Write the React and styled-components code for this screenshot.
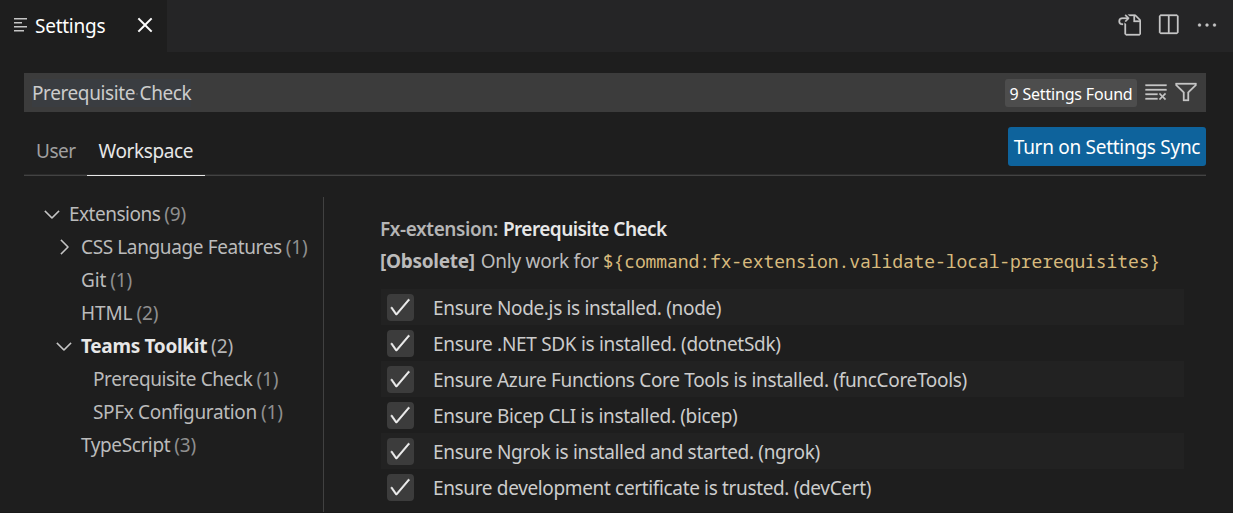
import React from "react";
import styled, { createGlobalStyle, css } from "styled-components";
import {
  VscGoToFile,
  VscSplitHorizontal,
  VscEllipsis,
  VscClearAll,
  VscFilter,
  VscChevronDown,
  VscChevronRight,
  VscCheck,
  VscClose,
} from "react-icons/vsc";

const GlobalStyle = createGlobalStyle`
  * { box-sizing: border-box; }
  body {
    margin: 0;
    background: #1e1e1e;
    color: #cccccc;
    font-family: "Noto Sans", "Open Sans", sans-serif;
    font-size: 19px;
    overflow: hidden;
  }
  svg { display: block; flex: none; }
`;

const Window = styled.div`
  display: flex;
  flex-direction: column;
  height: 513px;
  overflow: hidden;
  border-bottom: 1px solid #191919;
`;

const Label = styled.span`
  white-space: pre;
  letter-spacing: ${(p) => p.$track ?? -0.29}px;
`;

const TitleBar = styled.header`
  display: flex;
  justify-content: space-between;
  height: 52px;
  flex: none;
  background: #252526;
`;

const EditorTab = styled.div`
  display: flex;
  align-items: center;
  width: 167px;
  height: 52px;
  padding: 0 9px 1px 14px;
  background: #1e1e1e;
  color: #ffffff;
`;

const TabIcon = styled.svg`
  margin: 0 8px 2px 0;
`;

const CloseButton = styled.div`
  margin: 0 0 1px auto;
  font-size: 26px;
  svg {
    stroke-width: 0.35px;
  }
`;

const EditorActions = styled.div`
  display: flex;
  align-items: center;
  gap: 15px;
  padding: 0 14px 2px 0;
  font-size: 24px;
  color: #c5c5c5;
  svg {
    stroke-width: 0.2px;
  }
`;

const Header = styled.div`
  display: flex;
  flex-direction: column;
  padding: 21px 27px 0 24px;
`;

const SearchBox = styled.div`
  display: flex;
  align-items: center;
  height: 39px;
  padding: 0 8px;
  background: #3c3c3c;
`;

const Query = styled.div`
  display: flex;
  height: 28px;
  line-height: 29px;
  background: #3a3d41;
`;

const WhitespaceMark = styled.span`
  position: relative;
  white-space: pre;
  letter-spacing: -0.36px;
  &::after {
    content: "";
    position: absolute;
    left: 1px;
    top: 14px;
    width: 2px;
    height: 2px;
    background: #56595d;
  }
`;

const ResultCount = styled.div`
  display: flex;
  align-items: center;
  justify-content: center;
  width: 132px;
  height: 28px;
  margin-left: auto;
  padding-top: 2px;
  border-radius: 3px;
  background: #4d4d4d;
  color: #ffffff;
  font-size: 16px;
`;

const SearchActions = styled.div`
  display: flex;
  gap: 6px;
  margin: 0 0 1px 7px;
  font-size: 24px;
  color: #c5c5c5;
  svg {
    stroke-width: 0.2px;
  }
`;

const ScopeBar = styled.div`
  display: flex;
  align-items: flex-end;
  justify-content: space-between;
  height: 64px;
  background: linear-gradient(#2b2b2b, #2b2b2b) 0 62px / 100% 1px no-repeat,
    linear-gradient(#434343, #434343) 0 63px / 100% 1px no-repeat;
`;

const Scopes = styled.nav`
  display: flex;
`;

const Scope = styled.div`
  width: 63px;
  height: 49px;
  line-height: 48px;
  padding-left: 12px;
  color: #a0a0a0;
  border-bottom: 1px solid transparent;
  ${(p) =>
    p.$active &&
    css`
      width: 118px;
      padding-left: 11.5px;
      color: #e7e7e7;
      border-bottom-color: #e7e7e7;
    `}
`;

const SyncButton = styled.div`
  display: flex;
  align-items: center;
  justify-content: center;
  width: 198px;
  height: 39px;
  margin-bottom: 10px;
  border-radius: 3px;
  background: #0e639c;
  color: #ffffff;
`;

const Body = styled.div`
  display: flex;
  flex: 1;
  min-height: 0;
`;

const Tree = styled.aside`
  width: 324px;
  margin-top: 21px;
  border-right: 1px solid #414141;
`;

const TreeRow = styled.div`
  display: flex;
  align-items: center;
  height: 33px;
  padding-left: ${(p) => 40 + p.$level * 12}px;
  color: ${(p) => (p.$selected ? "#e7e7e7" : "#bbbbbb")};
  font-weight: ${(p) => (p.$selected ? 700 : 400)};
`;

const Twistie = styled.span`
  width: 29px;
  flex: none;
  font-size: 24px;
  color: #c5c5c5;
  svg {
    stroke-width: 0.2px;
  }
`;

const Count = styled.span`
  margin-left: 4px;
  letter-spacing: -0.15px;
  font-weight: 400;
  color: ${(p) => (p.$bright ? "#b5b5b5" : "#8f8f8f")};
`;

const Details = styled.main`
  display: flex;
  flex-direction: column;
  width: 804px;
  margin: 37px 0 0 56px;
`;

const Line = styled.div`
  display: flex;
  align-items: center;
  height: 32px;
  color: #bbbbbb;
`;

const Category = styled.span`
  margin-right: 5px;
  font-weight: 600;
  color: #b5b5b5;
`;

const SettingName = styled.span`
  font-weight: 600;
  color: #e7e7e7;
`;

const Strong = styled.span`
  margin-right: 6px;
  font-weight: 700;
`;

const Code = styled.code`
  margin-left: 4px;
  font-family: "Noto Sans Mono", "DejaVu Sans Mono", monospace;
  font-size: 18px;
  letter-spacing: -0.08px;
  color: #d7ba7d;
`;

const Checklist = styled.div`
  margin-top: 12px;
`;

const CheckRow = styled.div`
  display: flex;
  align-items: center;
  height: 36px;
  padding: 0 0 0 6px;
  margin-left: 1px;
  &:nth-child(odd) {
    background: #222222;
  }
`;

const CheckText = styled.div`
  padding-top: 2px;
`;

const Checkbox = styled.span`
  display: flex;
  align-items: center;
  justify-content: center;
  width: 27px;
  height: 27px;
  margin-right: 19px;
  padding: 0 1px 1px 0;
  border-radius: 4px;
  background: #3c3c3c;
  color: #f0f0f0;
  font-size: 24px;
  svg {
    stroke-width: 0.4px;
  }
`;

const tree = [
  { name: "Extensions", count: 9, level: 0, open: true, track: -0.5 },
  { name: "CSS Language Features", count: 1, level: 1, open: false, track: -0.38 },
  { name: "Git", count: 1, level: 1, track: -0.1 },
  { name: "HTML", count: 2, level: 1, track: -0.1 },
  { name: "Teams Toolkit", count: 2, level: 1, open: true, selected: true, track: -0.31 },
  { name: "Prerequisite Check", count: 1, level: 2, track: -0.39 },
  { name: "SPFx Configuration", count: 1, level: 2, track: -0.34 },
  { name: "TypeScript", count: 3, level: 1, track: -0.4 },
];

const checks = [
  ["Ensure Node.js is installed. (node)", -0.34],
  ["Ensure .NET SDK is installed. (dotnetSdk)", -0.31],
  ["Ensure Azure Functions Core Tools is installed. (funcCoreTools)", -0.325],
  ["Ensure Bicep CLI is installed. (bicep)", -0.34],
  ["Ensure Ngrok is installed and started. (ngrok)", -0.34],
  ["Ensure development certificate is trusted. (devCert)", -0.35],
];

function TreeItem({ item }) {
  return (
    <TreeRow $level={item.level} $selected={item.selected}>
      <Twistie>
        {item.open === true && <VscChevronDown />}
        {item.open === false && <VscChevronRight />}
      </Twistie>
      <Label $track={item.track}>{item.name}</Label>
      <Count $bright={item.selected}>({item.count})</Count>
    </TreeRow>
  );
}

export default function App() {
  return (
    <>
      <GlobalStyle />
      <Window>
        <TitleBar>
          <EditorTab>
            <TabIcon width="13" height="14" viewBox="0 0 13 14" fill="#c5c5c5">
              <path d="M0 0h13v1.6H0zM0 4h8v1.6H0zM0 8h13v1.6H0zM0 12h10v1.6H0z" />
            </TabIcon>
            <Label $track={-0.25}>Settings</Label>
            <CloseButton>
              <VscClose />
            </CloseButton>
          </EditorTab>
          <EditorActions>
            <VscGoToFile />
            <VscSplitHorizontal />
            <VscEllipsis />
          </EditorActions>
        </TitleBar>
        <Header>
          <SearchBox>
            <Query>
              <Label $track={-0.4}>Prerequisite</Label>
              <WhitespaceMark> </WhitespaceMark>
              <Label $track={-0.4}>Check</Label>
            </Query>
            <ResultCount>
              <Label $track={-0.18}>9 Settings Found</Label>
            </ResultCount>
            <SearchActions>
              <VscClearAll />
              <VscFilter />
            </SearchActions>
          </SearchBox>
          <ScopeBar>
            <Scopes>
              <Scope>
                <Label $track={-0.5}>User</Label>
              </Scope>
              <Scope $active>
                <Label $track={-0.38}>Workspace</Label>
              </Scope>
            </Scopes>
            <SyncButton>
              <Label $track={-0.28}>Turn on Settings Sync</Label>
            </SyncButton>
          </ScopeBar>
        </Header>
        <Body>
          <Tree>
            {tree.map((item) => (
              <TreeItem key={item.name} item={item} />
            ))}
          </Tree>
          <Details>
            <Line>
              <Category>
                <Label $track={-0.4}>Fx-extension:</Label>
              </Category>
              <SettingName>
                <Label $track={-0.55}>Prerequisite Check</Label>
              </SettingName>
            </Line>
            <Line>
              <Strong>
                <Label>[Obsolete]</Label>
              </Strong>
              <Label $track={-0.26}>Only work for</Label>
              <Code>{"${command:fx-extension.validate-local-prerequisites}"}</Code>
            </Line>
            <Checklist>
              {checks.map(([text, track]) => (
                <CheckRow key={text}>
                  <Checkbox>
                    <VscCheck />
                  </Checkbox>
                  <CheckText>
                    <Label $track={track}>{text}</Label>
                  </CheckText>
                </CheckRow>
              ))}
            </Checklist>
          </Details>
        </Body>
      </Window>
    </>
  );
}
